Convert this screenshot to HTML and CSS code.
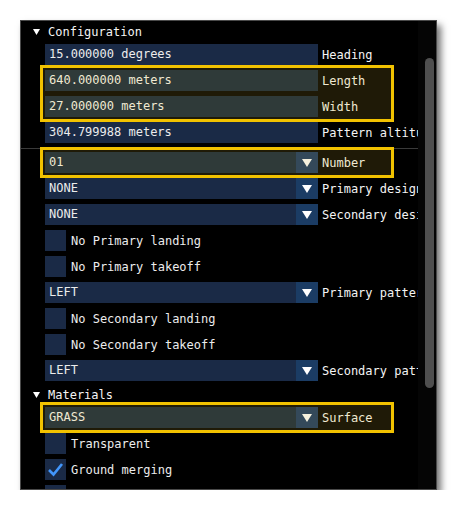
FILE: index.html
```html
<!DOCTYPE html>
<html lang="en">
<head>
    <meta charset="UTF-8">
    <title>Runway Properties</title>
    <link rel="stylesheet" href="styles.css">
</head>
<body>
    <div class="panel">
        <div class="content">
            <!-- Configuration section -->
            <div class="header">
                <svg class="tri" width="7" height="6" viewBox="0 0 7 6"><polygon points="0,0 7,0 3.5,6" fill="#fff"/></svg>
                <span>Configuration</span>
            </div>
            <div class="row">
                <div class="field">15.000000 degrees</div>
                <span class="label">Heading</span>
            </div>
            <div class="hl">
                <div class="row">
                    <div class="field">640.000000 meters</div>
                    <span class="label">Length</span>
                </div>
                <div class="row">
                    <div class="field">27.000000 meters</div>
                    <span class="label">Width</span>
                </div>
            </div>
            <div class="row">
                <div class="field">304.799988 meters</div>
                <span class="label">Pattern altitude</span>
            </div>
            <div class="sep"></div>
            <div class="hl">
                <div class="row">
                    <div class="field combo"><span>01</span><i class="arrow"><svg width="10" height="8" viewBox="0 0 10 8"><polygon points="0,0 10,0 5,8" fill="#f6f1de"/></svg></i></div>
                    <span class="label">Number</span>
                </div>
            </div>
            <div class="row">
                <div class="field combo"><span>NONE</span><i class="arrow"><svg width="10" height="8" viewBox="0 0 10 8"><polygon points="0,0 10,0 5,8" fill="#fff"/></svg></i></div>
                <span class="label">Primary designator</span>
            </div>
            <div class="row">
                <div class="field combo"><span>NONE</span><i class="arrow"><svg width="10" height="8" viewBox="0 0 10 8"><polygon points="0,0 10,0 5,8" fill="#fff"/></svg></i></div>
                <span class="label">Secondary designator</span>
            </div>
            <div class="row check">
                <div class="box"></div>
                <span>No Primary landing</span>
            </div>
            <div class="row check">
                <div class="box"></div>
                <span>No Primary takeoff</span>
            </div>
            <div class="row">
                <div class="field combo"><span>LEFT</span><i class="arrow"><svg width="10" height="8" viewBox="0 0 10 8"><polygon points="0,0 10,0 5,8" fill="#fff"/></svg></i></div>
                <span class="label">Primary pattern</span>
            </div>
            <div class="row check">
                <div class="box"></div>
                <span>No Secondary landing</span>
            </div>
            <div class="row check">
                <div class="box"></div>
                <span>No Secondary takeoff</span>
            </div>
            <div class="row">
                <div class="field combo"><span>LEFT</span><i class="arrow"><svg width="10" height="8" viewBox="0 0 10 8"><polygon points="0,0 10,0 5,8" fill="#fff"/></svg></i></div>
                <span class="label">Secondary pattern</span>
            </div>

            <!-- Materials section -->
            <div class="header mat">
                <svg class="tri" width="7" height="6" viewBox="0 0 7 6"><polygon points="0,0 7,0 3.5,6" fill="#fff"/></svg>
                <span>Materials</span>
            </div>
            <div class="hl">
                <div class="row">
                    <div class="field combo"><span>GRASS</span><i class="arrow"><svg width="10" height="8" viewBox="0 0 10 8"><polygon points="0,0 10,0 5,8" fill="#f6f1de"/></svg></i></div>
                    <span class="label">Surface</span>
                </div>
            </div>
            <div class="row check">
                <div class="box"></div>
                <span>Transparent</span>
            </div>
            <div class="row check">
                <div class="box"><svg width="21" height="21" viewBox="0 0 21 21"><polyline points="4,11 8.5,15.5 17,5" fill="none" stroke="#4296fa" stroke-width="2.6"/></svg></div>
                <span>Ground merging</span>
            </div>
            <div class="row check">
                <div class="box"></div>
                <span>Force terrain</span>
            </div>
        </div>
        <div class="scrollbar">
            <div class="thumb"></div>
        </div>
    </div>
</body>
</html>
```

FILE: styles.css
```css
/* Page */
body {
    margin: 0;
    background: #ffffff;
    font-family: 'DejaVu Sans Mono', 'Liberation Mono', monospace;
    font-size: 12px;
    color: #ececec;
}

/* Window */
.panel {
    margin: 20px 0 0 20px;
    width: 417px;
    height: 470px;
    box-sizing: border-box;
    background: #000000;
    border: 1px solid #4a4a4a;
    box-shadow: 4px 5px 7px rgba(0, 0, 0, 0.55);
    display: flex;
    overflow: hidden;
}

.content {
    width: 397px;
    flex-shrink: 0;
    overflow: hidden;
    padding: 3px 0 0 24px;
    box-sizing: border-box;
    display: flex;
    flex-direction: column;
    gap: 5px;
}

/* Section headers */
.header {
    height: 16px;
    line-height: 16px;
    margin-left: -12px;
    margin-bottom: -1px;
    display: flex;
    align-items: center;
    color: #f4f4f4;
    white-space: nowrap;
}

.header .tri {
    margin-right: 8px;
    margin-top: -1px;
}

.header.mat {
    margin-top: 1px;
}

/* Property rows */
.row {
    display: flex;
    align-items: center;
    gap: 4px;
    height: 21px;
    flex-shrink: 0;
    white-space: nowrap;
}

.field {
    width: 273px;
    height: 21px;
    line-height: 21px;
    padding-left: 4px;
    box-sizing: border-box;
    background: #1a2a46;
    flex-shrink: 0;
    display: flex;
}

.field.combo span {
    flex: 1;
}

.arrow {
    width: 22px;
    height: 21px;
    background: #1b3c64;
    display: flex;
    align-items: center;
    justify-content: center;
}

.label {
    color: #f4f4f4;
}

/* Checkboxes */
.check {
    gap: 5px;
}

.box {
    width: 21px;
    height: 21px;
    background: #1a2a46;
    flex-shrink: 0;
}

.box svg {
    display: block;
}

/* Separator */
.sep {
    height: 1px;
    margin: 0 0 -2px -24px;
    background: #3a3a3a;
    flex-shrink: 0;
}

/* Highlight boxes */
.hl {
    width: 354px;
    box-sizing: border-box;
    margin: -5px 0 -5px -5px;
    border: 3px solid #f2c200;
    padding: 2px;
    background: #1f1a07;
    display: flex;
    flex-direction: column;
    gap: 5px;
    flex-shrink: 0;
    color: #efe9d2;
}

.hl .field {
    background: #2f3a39;
}

.hl .arrow {
    background: #34495a;
}

.hl .label {
    color: #efe9d2;
}

/* Scrollbar */
.scrollbar {
    flex: 1;
    background: #050505;
    padding: 37px 0 0 7px;
}

.thumb {
    width: 9px;
    height: 330px;
    border-radius: 5px;
    background: #4f4f4f;
}
```
